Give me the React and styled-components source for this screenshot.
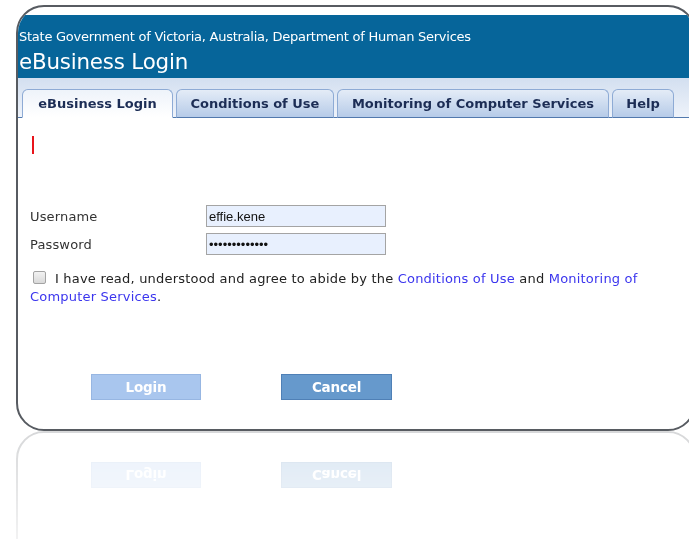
import styled, { createGlobalStyle } from "styled-components";

const GlobalStyle = createGlobalStyle`
  html, body {
    margin: 0;
    padding: 0;
    background: #ffffff;
    overflow: hidden;
  }
  body {
    font-family: "DejaVu Sans", Verdana, sans-serif;
  }
`;

const Page = styled.div`
  width: 689px;
  height: 539px;
  padding: 5px 0 0 16px;
  box-sizing: border-box;
`;

const Card = styled.div`
  width: 680px;
  height: 426px;
  box-sizing: border-box;
  border: 2px solid #575b61;
  border-radius: 28px;
  background: #ffffff;
  overflow: hidden;
  padding-top: 8px;
  display: flex;
  flex-direction: column;
  -webkit-box-reflect: below 0
    linear-gradient(to bottom, transparent 62%, rgba(255, 255, 255, 0.24) 100%);
`;

const Header = styled.header`
  background: #06659a;
  color: #ffffff;
  height: 63px;
  padding: 14px 0 0 1px;
  box-sizing: border-box;
`;

const Agency = styled.div`
  font-size: 13px;
  letter-spacing: -0.25px;
  line-height: 15px;
`;

const Title = styled.h1`
  margin: 6px 0 0;
  font-size: 21.4px;
  font-weight: normal;
  letter-spacing: -0.2px;
  line-height: 24px;
`;

const TabBar = styled.nav`
  height: 40px;
  box-sizing: border-box;
  padding: 11px 0 0 4px;
  display: flex;
  align-items: flex-end;
  gap: 3px;
  background: linear-gradient(#d3dff0, #eef3fa);
  border-bottom: 1px solid #5279ad;
`;

const Tab = styled.div`
  width: ${(p) => p.$w}px;
  height: 29px;
  box-sizing: border-box;
  margin-bottom: -1px;
  border: 1px solid #8eabd5;
  border-bottom-color: ${(p) => (p.$active ? "#ffffff" : "#5279ad")};
  border-radius: 6px 6px 0 0;
  background: ${(p) =>
    p.$active
      ? "linear-gradient(#eef3fa, #ffffff)"
      : "linear-gradient(#e4ecf7, #b6cbe8)"};
  color: #1c2d55;
  font-size: 13px;
  font-weight: bold;
  display: flex;
  align-items: center;
  justify-content: center;
  white-space: nowrap;
`;

const Body = styled.main`
  flex: 1;
  padding: 18px 0 0 12px;
  color: #333333;
`;

const ErrorMark = styled.span`
  display: block;
  width: 2px;
  height: 18px;
  margin-left: 2px;
  background: #e8141b;
`;

const Form = styled.div`
  margin-top: 51px;
  display: grid;
  grid-template-columns: 176px 180px;
  row-gap: 6px;
  align-items: center;
`;

const Label = styled.label`
  font-size: 13px;
  letter-spacing: 0.15px;
  color: #333333;
`;

const Field = styled.input`
  width: 180px;
  height: 22px;
  box-sizing: border-box;
  margin: 0;
  padding: 0 2px;
  border: 1px solid #a4a4a4;
  background: #e8f0fe;
  color: #111111;
  font-family: "Liberation Sans", Arial, sans-serif;
  font-size: 13px;
  outline: none;
`;

const Agree = styled.p`
  margin: 15px 30px 0 0;
  font-size: 13px;
  letter-spacing: 0.2px;
  line-height: 18px;
  color: #222222;
`;

const Check = styled.input`
  appearance: none;
  width: 13px;
  height: 13px;
  margin: 0 9px 0 3px;
  vertical-align: -1px;
  border: 1px solid #a3a3a3;
  border-radius: 2px;
  background: linear-gradient(#f2f2f2, #d9d9d9);
`;

const Link = styled.a`
  color: #3b35ee;
  text-decoration: none;
`;

const Actions = styled.div`
  margin: 68px 0 0 61px;
  display: flex;
  gap: 80px;
`;

const Button = styled.button`
  width: ${(p) => p.$w}px;
  height: 26px;
  box-sizing: border-box;
  border: 1px solid ${(p) => (p.$muted ? "#97b6e2" : "#4f80b6")};
  background: ${(p) => (p.$muted ? "#a9c6ee" : "#6699cc")};
  color: #ffffff;
  font-family: "DejaVu Sans", Verdana, sans-serif;
  font-size: 13.5px;
  font-weight: bold;
  letter-spacing: -0.2px;
  padding: 0;
`;

const tabs = [
  { label: "eBusiness Login", w: 151, active: true },
  { label: "Conditions of Use", w: 158 },
  { label: "Monitoring of Computer Services", w: 272 },
  { label: "Help", w: 62 },
];

export default function App() {
  return (
    <>
      <GlobalStyle />
      <Page>
        <Card>
          <Header>
            <Agency>
              State Government of Victoria, Australia, Department of Human
              Services
            </Agency>
            <Title>eBusiness Login</Title>
          </Header>
          <TabBar>
            {tabs.map((t) => (
              <Tab key={t.label} $w={t.w} $active={t.active}>
                {t.label}
              </Tab>
            ))}
          </TabBar>
          <Body>
            <ErrorMark />
            <Form>
              <Label>Username</Label>
              <Field type="text" value="effie.kene" readOnly />
              <Label>Password</Label>
              <Field type="password" value="*************" readOnly />
            </Form>
            <Agree>
              <Check type="checkbox" />
              I have read, understood and agree to abide by the{" "}
              <Link href="#">Conditions of Use</Link> and{" "}
              <Link href="#">Monitoring of Computer Services</Link>.
            </Agree>
            <Actions>
              <Button $w={110} $muted>
                Login
              </Button>
              <Button $w={111}>Cancel</Button>
            </Actions>
          </Body>
        </Card>
      </Page>
    </>
  );
}
